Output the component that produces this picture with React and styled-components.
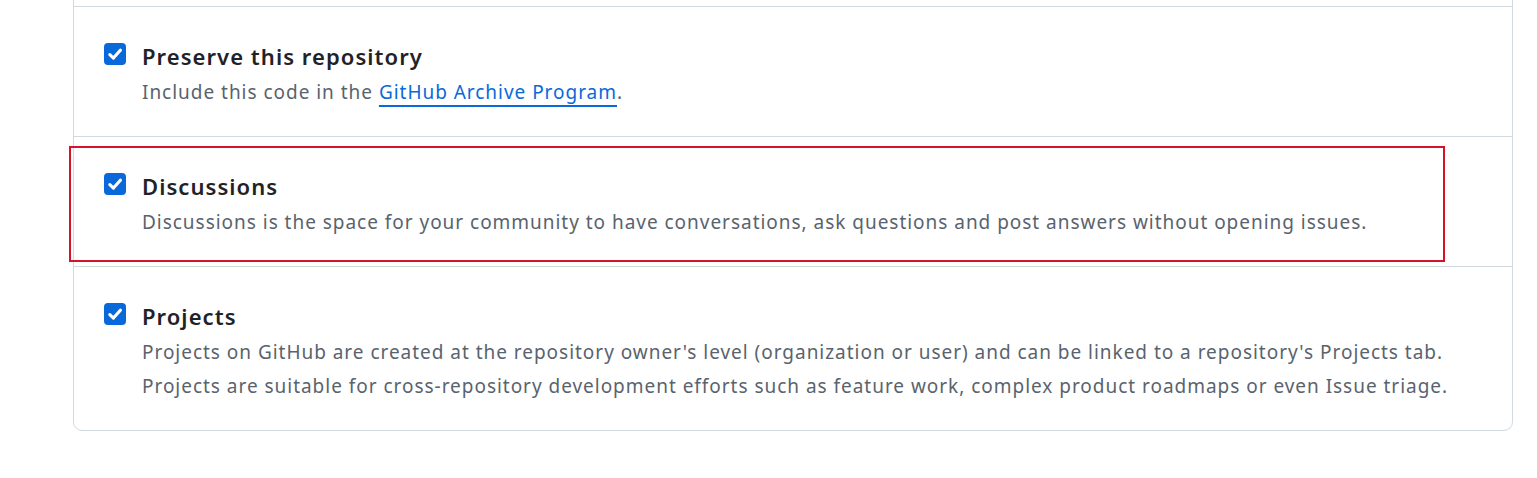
import React from "react";
import styled, { createGlobalStyle } from "styled-components";

const GlobalStyle = createGlobalStyle`
  html, body { margin: 0; padding: 0; background: #ffffff; }
  body { font-family: "Noto Sans", "Open Sans", sans-serif; }
`;

const Page = styled.div`
  padding-left: 73px;
  height: 478px;
  overflow: hidden;
`;

const Box = styled.div`
  width: 1440px;
  box-sizing: border-box;
  margin-top: -12px;
  border: 1px solid #d1d9e0;
  border-radius: 9px;
  background: #fff;
`;

const Stub = styled.div`
  height: 17px;
`;

const Row = styled.div`
  position: relative;
  display: flex;
  align-items: flex-start;
  gap: 16px;
  padding: 34px 24px 27px 30px;
  border-top: 1px solid #d1d9e0;
`;

const Check = styled.span`
  flex: none;
  margin-top: 2px;
  width: 22px;
  height: 22px;
  border-radius: 4px;
  background: #0969da;
  display: flex;
  align-items: center;
  justify-content: center;
`;

const Body = styled.div`
  display: flex;
  flex-direction: column;
`;

const Title = styled.div`
  font-size: 22px;
  font-weight: 600;
  letter-spacing: 1.05px;
  line-height: 30px;
  color: #1f2328;
  margin-bottom: 4px;
`;

const Desc = styled.p`
  margin: 0;
  font-size: 19px;
  letter-spacing: 0.97px;
  line-height: 34px;
  color: #59636e;
`;

const Link = styled.a`
  color: #0969da;
  text-decoration: underline;
  text-decoration-thickness: 2px;
  text-underline-offset: 6px;
`;

const Highlight = styled.div`
  position: absolute;
  left: -5px;
  top: 9px;
  width: 1376px;
  height: 116px;
  box-sizing: border-box;
  border: 2px solid #d3132a;
  pointer-events: none;
`;

const CheckIcon = () => (
  <svg width="18" height="18" viewBox="0 0 16 16" aria-hidden="true">
    <path
      d="M3.4 8.6 L6.6 11.6 L12.8 4.6"
      fill="none"
      stroke="#fff"
      strokeWidth="2.8"
      strokeLinecap="round"
      strokeLinejoin="round"
    />
  </svg>
);

const Option = ({ title, children, highlighted }) => (
  <Row>
    {highlighted && <Highlight />}
    <Check>
      <CheckIcon />
    </Check>
    <Body>
      <Title>{title}</Title>
      {children}
    </Body>
  </Row>
);

export default function App() {
  return (
    <>
      <GlobalStyle />
      <Page>
        <Box>
          <Stub />
          <Option title="Preserve this repository">
            <Desc>
              Include this code in the <Link href="#">GitHub Archive Program</Link>.
            </Desc>
          </Option>
          <Option title="Discussions" highlighted>
            <Desc>
              Discussions is the space for your community to have conversations, ask questions and post answers without opening issues.
            </Desc>
          </Option>
          <Option title="Projects">
            <Desc>
              Projects on GitHub are created at the repository owner's level (organization or user) and can be linked to a repository's Projects tab.
              <br />
              Projects are suitable for cross-repository development efforts such as feature work, complex product roadmaps or even Issue triage.
            </Desc>
          </Option>
        </Box>
      </Page>
    </>
  );
}
